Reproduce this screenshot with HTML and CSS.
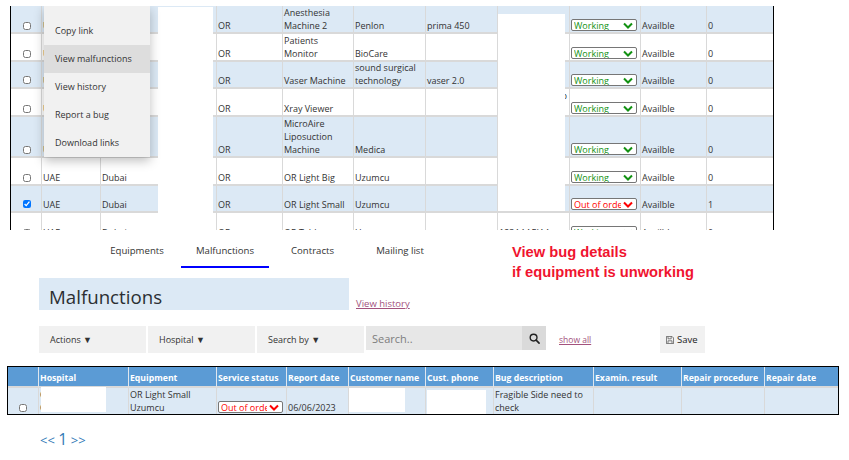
FILE: index.html
```html
<!DOCTYPE html>
<html lang="en">
<head>
<meta charset="utf-8">
<title>Equipment malfunctions</title>
<link rel="stylesheet" href="styles.css">
</head>
<body>
<section class="equip-wrap">
  <table class="equip">
    <colgroup>
      <col class="c-check"><col class="c-country"><col class="c-city"><col class="c-dept"><col class="c-name"><col class="c-maker"><col class="c-model"><col class="c-serial"><col class="c-status"><col class="c-avail"><col class="c-count">
    </colgroup>
    <tbody>
      <tr class="alt h28"><td><input type="checkbox"></td><td>UAE</td><td>Dubai</td><td>OR</td><td>Anesthesia Machine 2</td><td>Penlon</td><td>prima 450</td><td></td><td><select class="ok"><option>Working</option></select></td><td>Availble</td><td>0</td></tr>
      <tr class="h28"><td><input type="checkbox"></td><td>UAE</td><td>Dubai</td><td>OR</td><td>Patients Monitor</td><td>BioCare</td><td></td><td></td><td><select class="ok"><option>Working</option></select></td><td>Availble</td><td>0</td></tr>
      <tr class="alt h27"><td><input type="checkbox"></td><td>UAE</td><td>Dubai</td><td>OR</td><td>Vaser Machine</td><td>sound surgical technology</td><td>vaser 2.0</td><td></td><td><select class="ok"><option>Working</option></select></td><td>Availble</td><td>0</td></tr>
      <tr class="h28"><td><input type="checkbox"></td><td>UAE</td><td>Dubai</td><td>OR</td><td>Xray Viewer</td><td></td><td></td><td class="serial">p<br>&nbsp;</td><td><select class="ok"><option>Working</option></select></td><td>Availble</td><td>0</td></tr>
      <tr class="alt h41"><td><input type="checkbox"></td><td>UAE</td><td>Dubai</td><td>OR</td><td>MicroAire Liposuction Machine</td><td>Medica</td><td></td><td></td><td><select class="ok"><option>Working</option></select></td><td>Availble</td><td>0</td></tr>
      <tr class="h28"><td><input type="checkbox"></td><td>UAE</td><td>Dubai</td><td>OR</td><td>OR Light Big</td><td>Uzumcu</td><td></td><td></td><td><select class="ok"><option>Working</option></select></td><td>Availble</td><td>0</td></tr>
      <tr class="alt h27"><td><input type="checkbox" checked></td><td>UAE</td><td>Dubai</td><td>OR</td><td>OR Light Small</td><td>Uzumcu</td><td></td><td></td><td><select class="bad"><option>Out of order</option></select></td><td>Availble</td><td>1</td></tr>
      <tr class="h28"><td><input type="checkbox"></td><td>UAE</td><td>Dubai</td><td>OR</td><td>OR Table</td><td>Uzumcu</td><td></td><td>123AAAEIAA</td><td><select class="ok"><option>Working</option></select></td><td>Availble</td><td>0</td></tr>
    </tbody>
  </table>
  <div class="mask mask-hosp"></div>
  <div class="mask mask-serial"></div>
  <ul class="menu">
    <li>Copy link</li>
    <li class="active">View malfunctions</li>
    <li>View history</li>
    <li>Report a bug</li>
    <li>Download links</li>
  </ul>
</section>

<section class="tabs-row">
  <nav class="tabs">
    <a class="tab tab-eq">Equipments</a>
    <a class="tab tab-mal current">Malfunctions</a>
    <a class="tab tab-con">Contracts</a>
    <a class="tab tab-mail">Mailing list</a>
  </nav>
  <p class="note">View bug details<br>if equipment is unworking</p>
</section>

<section class="title-row">
  <h1>Malfunctions</h1>
  <a class="link history">View history</a>
</section>

<section class="toolbar">
  <button class="drop">Actions ▼</button>
  <button class="drop">Hospital ▼</button>
  <button class="drop">Search by ▼</button>
  <div class="search">
    <input type="text" placeholder="Search..">
    <span class="search-btn">
      <svg viewBox="0 0 12 12" width="11" height="11"><circle cx="5" cy="5" r="3.7" fill="none" stroke="#222" stroke-width="1.5"/><path d="M7.8 7.8 11 11" stroke="#222" stroke-width="1.8" stroke-linecap="round"/></svg>
    </span>
  </div>
  <a class="link showall">show all</a>
  <button class="save">
    <svg viewBox="0 0 10 10" width="8" height="8"><path d="M.5.5h7l2 2v7h-9z" fill="none" stroke="#555" stroke-width="1"/><path d="M2.5 1v2.5h4V1M2.5 9V6h5v3" fill="none" stroke="#555" stroke-width=".9"/></svg>
    Save
  </button>
</section>

<section class="bug-wrap">
  <table class="bugs">
    <colgroup>
      <col class="b-check"><col class="b-hosp"><col class="b-equip"><col class="b-status"><col class="b-date"><col class="b-cust"><col class="b-phone"><col class="b-desc"><col class="b-result"><col class="b-proc"><col class="b-repair">
    </colgroup>
    <thead>
      <tr><th></th><th>Hospital</th><th>Equipment</th><th>Service status</th><th>Report date</th><th>Customer name</th><th>Cust. phone</th><th>Bug description</th><th>Examin. result</th><th>Repair procedure</th><th>Repair date</th></tr>
    </thead>
    <tbody>
      <tr><td><input type="checkbox"></td><td>O<br>O</td><td>OR Light Small Uzumcu</td><td><select class="bad wide"><option>Out of order</option></select></td><td>06/06/2023</td><td></td><td></td><td>Fragible Side need to check</td><td></td><td></td><td></td></tr>
    </tbody>
  </table>
  <div class="mask mask-b1"></div>
  <div class="mask mask-b2"></div>
  <div class="mask mask-b3"></div>
</section>

<nav class="pager"><a>&lt;&lt;</a> <a class="num">1</a> <a>&gt;&gt;</a></nav>
</body>
</html>
```

FILE: styles.css
```css
* { box-sizing: border-box; }
html, body { margin: 0; padding: 0; }
body {
  width: 849px;
  height: 460px;
  overflow: hidden;
  background: #fff;
  color: #333;
  font-family: "Open Sans", sans-serif;
  font-size: 9px;
}
table { border-collapse: separate; border-spacing: 0; table-layout: fixed; }

/* equipment grid */
.equip-wrap {
  position: relative;
  width: 764px;
  height: 224px;
  margin: 6px 0 0 10px;
  overflow: hidden;
  border-left: 1px solid #000;
  border-right: 1px solid #000;
}
.equip { width: 762px; }
.equip td {
  padding: 0 1px;
  line-height: 13px;
  vertical-align: bottom;
  border-right: 1px solid #d9d9d9;
  border-bottom: 2px solid #d9d9d9;
  overflow: hidden;
}
.equip td:first-child { text-align: center; padding: 0 0 1px 1px; }
.equip td:last-child { border-right: 0; }
.equip tr.alt td { background: #dce9f5; }
.h27 { height: 27px; }
.equip .h27 td { line-height: 12.5px; }
.h28 { height: 28px; }
.h41 { height: 41px; }
.c-check { width: 31px; }
.c-country { width: 59px; }
.c-city { width: 116px; }
.c-dept { width: 66px; }
.c-name { width: 71px; }
.c-maker { width: 72px; }
.c-model { width: 72px; }
.c-serial { width: 72px; }
.c-status { width: 71px; }
.c-avail { width: 66px; }
.c-count { width: 66px; }
.equip td.serial { white-space: nowrap; text-align: right; padding-right: 2px; }
input[type="checkbox"] { width: 8px; height: 8px; margin: 0; vertical-align: middle; }
select {
  display: block;
  width: 66px;
  height: 12px;
  margin: 0 0 1px;
  padding: 0 15px 0 2px;
  font-family: "Open Sans", sans-serif;
  font-size: 9px;
  line-height: 11px;
  appearance: none;
  background-color: #fff;
  background-repeat: no-repeat;
  background-position: right 3px center;
  background-size: 10px 7px;
  border: 1px solid #767676;
  border-radius: 2px;
}
select.ok {
  color: #129112;
  background-image: url("data:image/svg+xml,%3Csvg xmlns='http://www.w3.org/2000/svg' viewBox='0 0 10 7'%3E%3Cpath d='M1 1.5l4 4 4-4' fill='none' stroke='%23129112' stroke-width='2'/%3E%3C/svg%3E");
}
select.bad {
  color: #f00;
  background-image: url("data:image/svg+xml,%3Csvg xmlns='http://www.w3.org/2000/svg' viewBox='0 0 10 7'%3E%3Cpath d='M1 1.5l4 4 4-4' fill='none' stroke='%23f00' stroke-width='2'/%3E%3C/svg%3E");
}
.mask { position: absolute; background: #fff; }
.mask-hosp { left: 147px; top: 1px; width: 55px; height: 224px; }
.mask-serial { left: 487px; top: 8px; width: 67px; height: 197px; }
.menu {
  position: absolute;
  left: 33px;
  top: 0;
  width: 106px;
  height: 151px;
  margin: 0;
  padding: 11px 0 0;
  list-style: none;
  background: #f1f1f1;
  box-shadow: 0 4px 10px rgba(0, 0, 0, .25);
}
.menu li { height: 28px; padding-left: 11px; line-height: 28px; color: #333; }
.menu li.active { background: #ddd; }

/* tabs */
.tabs-row { display: flex; height: 40px; margin-top: 8px; }
.tabs { display: flex; width: 512px; height: 38px; padding-left: 110px; align-items: flex-start; }
.tab { display: block; height: 30px; padding-top: 6px; font-size: 9.6px; line-height: 13px; color: #333; text-align: center; border-bottom: 2px solid transparent; }
.tab-eq { width: 54px; margin-right: 17px; }
.tab-mal { width: 88px; }
.tab-con { width: 43px; margin-left: 22px; margin-right: 41px; }
.tab-mail { width: 50px; white-space: nowrap; }
.tab.current { border-bottom-color: #00f; }
.note {
  margin: 4px 0 0;
  font-family: "Liberation Sans", sans-serif;
  font-size: 14.7px;
  font-weight: 700;
  line-height: 20px;
  color: #f0142f;
}

/* title */
.title-row { display: flex; align-items: flex-end; margin-left: 39px; height: 32px; }
h1 {
  width: 310px;
  height: 32px;
  margin: 0;
  padding: 6px 0 0 10px;
  background: #dce9f5;
  font-size: 18.7px;
  font-weight: 400;
  line-height: 25px;
  color: #2b2f33;
}
.link { color: #a3527d; text-decoration: underline; font-size: 9.5px; }
.history { margin-left: 7px; line-height: 13px; }

/* toolbar */
.toolbar { display: flex; align-items: flex-start; margin: 16px 0 0 39px; height: 27px; }
.drop {
  width: 107px;
  height: 27px;
  margin-right: 2px;
  padding: 0 0 0 11px;
  border: 0;
  background: #f1f1f1;
  color: #333;
  font-family: "Open Sans", sans-serif;
  font-size: 9px;
  text-align: left;
}
.search { display: flex; height: 24px; }
.search input {
  width: 156px;
  height: 24px;
  padding: 0 6px;
  border: 0;
  background: #e7e7e7;
  font-family: "Open Sans", sans-serif;
  font-size: 11px;
  color: #777;
}
.search input::placeholder { color: #7d7d7d; }
.search-btn { display: flex; width: 24px; align-items: center; justify-content: center; background: #dadada; }
.showall { margin: 7px 0 0 13px; width: 101px; line-height: 13px; font-size: 8.5px; }
.save {
  display: flex;
  align-items: center;
  gap: 3px;
  width: 45px;
  height: 27px;
  padding: 0 0 0 6px;
  border: 0;
  background: #f1f1f1;
  color: #222;
  font-family: "Open Sans", sans-serif;
  font-size: 9.5px;
}

/* malfunction table */
.bug-wrap { position: relative; width: 831px; margin: 13px 0 0 7px; }
.bugs { width: 831px; border: 1px solid #000; }
.bugs th {
  height: 21px;
  padding: 3px 1px 0;
  background: #5b9bd5;
  color: #fff;
  font-size: 8.7px;
  font-weight: 700;
  text-align: left;
  white-space: nowrap;
  border-right: 1px solid #dfe6ee;
  border-bottom: 2px solid #d9d9d9;
}
.bugs td {
  height: 26px;
  padding: 0 1px;
  line-height: 13px;
  vertical-align: bottom;
  background: #dce9f5;
  border-right: 1px solid #d9d9d9;
}
.bugs td:first-child { text-align: center; padding-bottom: 1px; }
.bugs th:last-child, .bugs td:last-child { border-right: 0; }
.b-check { width: 31px; }
.b-hosp { width: 90px; }
.b-equip { width: 88px; }
.b-status { width: 70px; }
.b-date { width: 62px; }
.b-cust { width: 77px; }
.b-phone { width: 68px; }
.b-desc { width: 100px; }
.b-result { width: 88px; }
.b-proc { width: 83px; }
.b-repair { width: 73px; }
select.wide { margin: 0 0 1px; width: 65px; }
.mask-b1 { left: 34px; top: 21px; width: 65px; height: 25px; }
.mask-b2 { left: 342px; top: 22px; width: 56px; height: 24px; }
.mask-b3 { left: 420px; top: 24px; width: 59px; height: 24px; }

/* pager */
.pager { margin: 14px 0 0 40px; color: #337ab7; font-size: 13px; line-height: 20px; }
.pager .num { font-size: 16px; }
```
